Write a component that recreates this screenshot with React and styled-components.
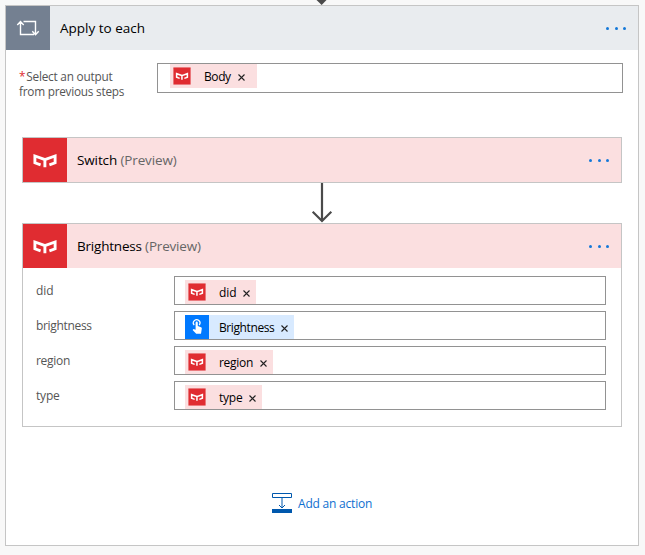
import React from "react";
import styled, { createGlobalStyle } from "styled-components";

const GlobalStyle = createGlobalStyle`
  *, *::before, *::after { box-sizing: border-box; }
  html, body { margin: 0; background: #f8f8f8; }
  body { font-family: "Open Sans", "Noto Sans", sans-serif; font-size: 12px; color: #000; }
`;

const Page = styled.main`
  width: 645px;
  height: 555px;
  padding: 0 0 0 5px;
  overflow: hidden;
  background: #f8f8f8;
`;

const IncomingArrow = styled.svg`
  display: block;
  width: 634px;
  height: 5px;
`;

const Scope = styled.section`
  width: 634px;
  height: 541px;
  border: 1px solid #c5c5c5;
  background: #fff;
`;

const Header = styled.header`
  display: flex;
  align-items: center;
  height: 44px;
  padding-right: 12px;
  background: ${(p) => p.$bg};
`;

const HeaderIcon = styled.div`
  display: flex;
  width: 44px;
  height: 44px;
  background: ${(p) => p.$bg};
`;

const Title = styled.h2`
  flex: 1;
  margin: 0 0 0 10px;
  font-size: 13.5px;
  font-weight: 400;
  line-height: 20px;
  white-space: nowrap;
  letter-spacing: ${(p) => p.$track || 0}px;
`;

const Suffix = styled.span`
  color: #666;
`;

const MenuButton = styled.button`
  display: flex;
  gap: 5.4px;
  margin: 1px 0 0;
  padding: 0;
  border: 0;
  background: none;
`;

const Dot = styled.span`
  width: 3px;
  height: 3px;
  border-radius: 1.5px;
  background: #1478d8;
`;

const SourceRow = styled.div`
  display: flex;
  height: 87px;
  padding: 13px 15px 0 13px;
`;

const SourceLabel = styled.label`
  width: 138px;
  padding-top: 6px;
  color: #555;
  font-size: 11.8px;
  line-height: 15px;
  white-space: nowrap;
`;

const LabelLine = styled.span`
  display: block;
  letter-spacing: ${(p) => p.$track}px;
`;

const Required = styled.span`
  margin-right: 1px;
  color: #e02b2f;
`;

const Input = styled.div`
  display: flex;
  flex: 1;
  align-items: flex-start;
  height: ${(p) => p.$height}px;
  padding: ${(p) => p.$pad};
  border: 1px solid #929292;
  background: #fff;
`;

const TokenBox = styled.span`
  display: flex;
  align-items: center;
  width: ${(p) => p.$width}px;
  height: 24px;
  padding-right: ${(p) => p.$end}px;
  background: ${(p) => p.$bg};
`;

const TokenIcon = styled.span`
  display: flex;
  align-items: center;
  justify-content: center;
  width: 24px;
  height: 24px;
  margin-right: 10px;
  background: ${(p) => p.$bg};
`;

const TokenText = styled.span`
  flex: 1;
  line-height: 16px;
  padding-top: 2px;
  white-space: nowrap;
  letter-spacing: ${(p) => p.$track}px;
`;

const Remove = styled.svg`
  width: 7px;
  height: 7px;
  margin-top: 3px;
`;

const Steps = styled.div`
  padding: 0 16px;
`;

const Card = styled.article`
  width: 600px;
  height: ${(p) => p.$height}px;
  border: 1px solid #c5c5c5;
  background: #fff;
`;

const Connector = styled.svg`
  display: block;
  width: 600px;
  height: 40px;
`;

const Fields = styled.div`
  display: grid;
  gap: 6px;
  padding: 8px 15px 0 13px;
`;

const FieldRow = styled.div`
  display: flex;
`;

const FieldLabel = styled.label`
  width: 138px;
  padding-top: 6px;
  color: #555;
  line-height: 17px;
  letter-spacing: ${(p) => p.$track}px;
`;

const AddAction = styled.button`
  display: flex;
  align-items: center;
  gap: 6px;
  margin: 65px 0 0 250px;
  padding: 0;
  border: 0;
  background: none;
  color: #0f6fd0;
  font: inherit;
  line-height: 20px;
  letter-spacing: -0.21px;
  white-space: nowrap;
`;

const AddText = styled.span`
  padding-top: 2px;
`;

const Svg = styled.svg`
  display: block;
  flex: none;
`;

const LoopIcon = () => (
  <Svg width="44" height="44" viewBox="0 0 44 44" fill="none" stroke="#fff" strokeWidth="1.4">
    <path d="M14.5 16V28.5H28M11.3 19L14.5 15.5L17.7 19M17.5 15.5H29.5V28M26.3 25.3L29.5 28.7L32.7 25.3" />
  </Svg>
);

const YeelightMark = () => (
  <path
    fill="none"
    stroke="#fff"
    strokeWidth="2.9"
    d="M17.6 26.8L11.9 24.8V18L21.9 21.6V29.2M21.9 21.6L32.1 18V24.8L26.4 26.8"
  />
);

const YeelightIcon = () => (
  <Svg width="44" height="44" viewBox="0 0 44 44"><YeelightMark /></Svg>
);

const YeelightBadge = () => (
  <Svg width="18" height="18" viewBox="0 0 44 44">
    <rect x="1" y="1" width="42" height="42" rx="2" fill="#e02c31" stroke="#e9787c" strokeWidth="2" />
    <g transform="translate(-6.6 -7) scale(1.3)"><YeelightMark /></g>
  </Svg>
);

const TapIcon = () => (
  <Svg width="24" height="24" viewBox="0 0 24 24">
    <path d="M9.2 10.2A3.3 3.3 0 1 1 14.2 10.1" fill="none" stroke="#fff" strokeWidth="1.2" />
    <path d="M10.6 7.8Q10.6 6.6 11.7 6.6T12.8 7.8V11L16 12.2Q17 12.6 16.8 13.6L16 18.8H11.2L7.6 15L8.5 14.1L10.6 14.7Z" fill="#fff" />
  </Svg>
);

const Menu = () => (
  <MenuButton aria-label="Menu">
    <Dot /><Dot /><Dot />
  </MenuButton>
);

const Token = ({ text, width, track = 0, tap = false, end = 6 }) => (
  <TokenBox $width={width} $end={end} $bg={tap ? "#d8eaff" : "#fbdfe0"}>
    <TokenIcon $bg={tap ? "#0079ff" : "transparent"}>
      {tap ? <TapIcon /> : <YeelightBadge />}
    </TokenIcon>
    <TokenText $track={track}>{text}</TokenText>
    <Remove viewBox="0 0 7 7" aria-label="Remove">
      <path d="M0.5 0.5L6.5 6.5M6.5 0.5L0.5 6.5" stroke="#222" strokeWidth="1.1" />
    </Remove>
  </TokenBox>
);

const fields = [
  { label: "did", width: 71 },
  { label: "brightness", text: "Brightness", width: 109, tap: true, track: -0.4, labelTrack: -0.33 },
  { label: "region", width: 88, track: -0.3, labelTrack: -0.3 },
  { label: "type", width: 77, track: -0.25, labelTrack: -0.2 },
];

export default function App() {
  return (
    <Page>
      <GlobalStyle />
      <IncomingArrow viewBox="0 0 634 5">
        <path d="M311.5 0H321.5L316.7 5Z" fill="#4a4a4a" />
      </IncomingArrow>
      <Scope>
        <Header $bg="#e9ecef">
          <HeaderIcon $bg="#748091"><LoopIcon /></HeaderIcon>
          <Title>Apply to each</Title>
          <Menu />
        </Header>
        <SourceRow>
          <SourceLabel>
            <LabelLine $track={-0.22}><Required>*</Required>Select an output</LabelLine>
            <LabelLine $track={-0.24}>from previous steps</LabelLine>
          </SourceLabel>
          <Input $height={30} $pad="0 12px">
            <Token text="Body" width={87} track={-0.4} end={12} />
          </Input>
        </SourceRow>
        <Steps>
          <Card $height={46}>
            <Header $bg="#fbdfe0">
              <HeaderIcon $bg="#e02c31"><YeelightIcon /></HeaderIcon>
              <Title $track={-0.13}>Switch <Suffix>(Preview)</Suffix></Title>
              <Menu />
            </Header>
          </Card>
          <Connector viewBox="0 0 600 40">
            <path d="M300 0V38M290.7 28.7L300 38L309.3 28.7" fill="none" stroke="#4a4a4a" strokeWidth="2.2" />
          </Connector>
          <Card $height={204}>
            <Header $bg="#fbdfe0">
              <HeaderIcon $bg="#e02c31"><YeelightIcon /></HeaderIcon>
              <Title $track={-0.2}>Brightness <Suffix>(Preview)</Suffix></Title>
              <Menu />
            </Header>
            <Fields>
              {fields.map((f) => (
                <FieldRow key={f.label}>
                  <FieldLabel $track={f.labelTrack || 0}>{f.label}</FieldLabel>
                  <Input $height={29} $pad="3px 10px 0">
                    <Token text={f.text || f.label} width={f.width} tap={f.tap} track={f.track} />
                  </Input>
                </FieldRow>
              ))}
            </Fields>
          </Card>
          <AddAction>
            <Svg width="20" height="20" viewBox="0 0 20 20" fill="none" stroke="#0058ad">
              <path d="M0.5 0.5H19.5V4.5H0.5Z" />
              <path d="M10 5V15M7 12L10 15L13 12" />
              <path d="M0 16H20V20H0Z" fill="#0058ad" stroke="none" />
            </Svg>
            <AddText>Add an action</AddText>
          </AddAction>
        </Steps>
      </Scope>
    </Page>
  );
}
